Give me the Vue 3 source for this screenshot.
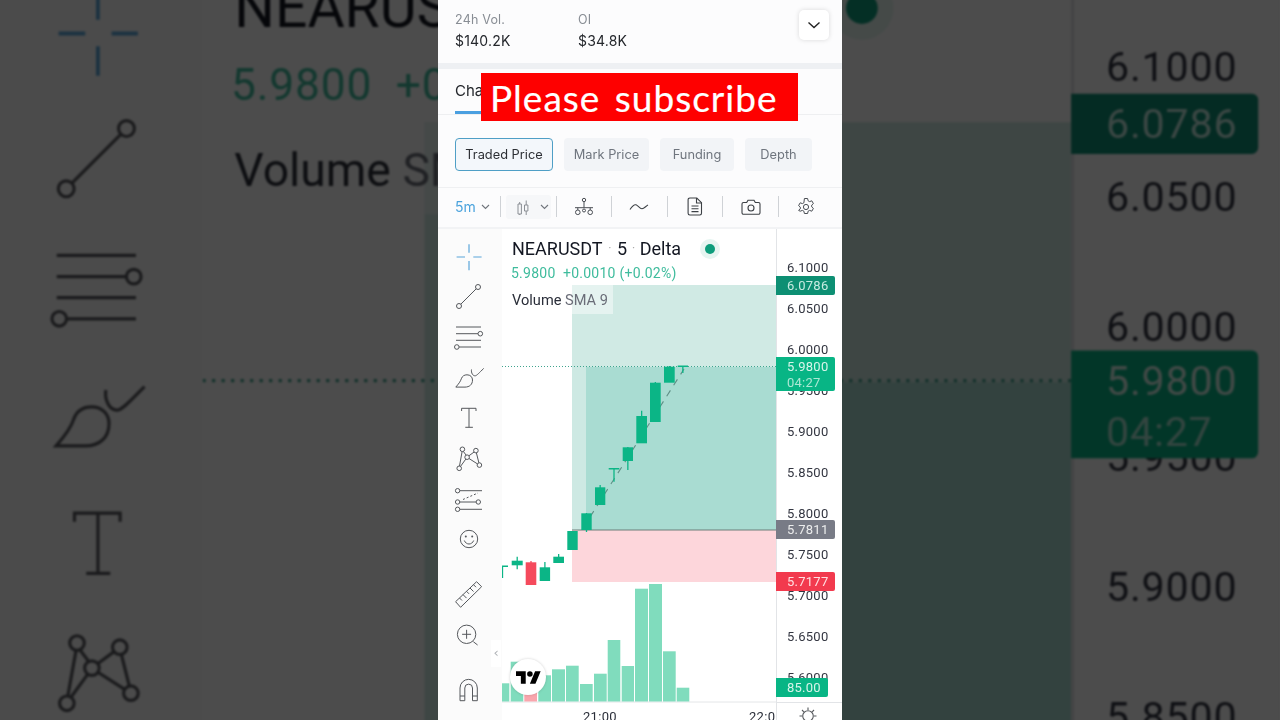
<template>
  <div class="stage">
    <div
      v-for="layer in layers"
      :key="layer"
      class="panel"
      :class="layer"
    >
      <!-- stats -->
      <div class="stats">
        <div class="stat">
          <span class="stat-label">24h Vol.</span>
          <span class="stat-value">$140.2K</span>
        </div>
        <div class="stat">
          <span class="stat-label">OI</span>
          <span class="stat-value">$34.8K</span>
        </div>
        <button class="collapse">
          <svg width="14" height="8" viewBox="0 0 14 8"><path d="M1.5 1.5 7 6.5l5.5-5" /></svg>
        </button>
      </div>

      <div class="tabs"><span class="tab">Chart</span></div>

      <div class="price-types">
        <span
          v-for="b in priceTypes"
          :key="b.label"
          class="price-type"
          :class="{ active: b.active }"
          :style="{ width: b.width + 'px' }"
        >{{ b.label }}</span>
      </div>

      <!-- top chart toolbar -->
      <div class="toolbar">
        <div class="cell first">
          <span class="interval">5m</span>
          <svg class="caret" width="9" height="6" viewBox="0 0 9 6"><path d="M1 1l3.5 3.5L8 1" /></svg>
        </div>
        <div class="cell">
          <span class="cell-hover">
            <svg width="12" height="18" viewBox="0 0 12 18" class="ic light">
              <path d="M1 6h3.400v10H1zM2.700 4v2M2.700 16v1M7.500 7h3.400v6H7.500zM9.200 2.500V7M9.200 13v4" />
            </svg>
            <svg class="caret" width="9" height="6" viewBox="0 0 9 6"><path d="M1 1l3.500 3.500L8 1" /></svg>
          </span>
        </div>
        <div class="cell">
          <svg width="22" height="20" viewBox="0 0 22 20" class="ic">
            <circle cx="11" cy="3" r="1.700" />
            <path d="M11 4.700v6M2 10.700h18M4.800 10.700v2.300M17.200 10.700v2.300" />
            <circle cx="4.800" cy="15.300" r="2.300" />
            <circle cx="17.200" cy="15.300" r="2.300" />
            <circle cx="11" cy="13.500" r="1.500" />
          </svg>
        </div>
        <div class="cell">
          <svg width="20" height="12" viewBox="0 0 20 12" class="ic dark">
            <path d="M1 8.500C3 5.500 5 3 7 3.800s4 4.200 6 4S17 5 19 4" />
          </svg>
        </div>
        <div class="cell">
          <svg width="16" height="19" viewBox="0 0 16 19" class="ic dark">
            <path d="M2.800 1h7l4.700 4.700v10.600a1.700 1.700 0 0 1-1.700 1.700h-10a1.700 1.700 0 0 1-1.700-1.700V2.700A1.700 1.700 0 0 1 2.800 1z" />
            <path d="M9.500 1v5h5M4.500 9h7M4.500 11.800h7M4.500 14.600h7" />
          </svg>
        </div>
        <div class="cell">
          <svg width="20" height="16" viewBox="0 0 20 16" class="ic dark">
            <path d="M2.500 3.500h3.200l1.300-2.300h6l1.300 2.300h3.200a1.500 1.500 0 0 1 1.500 1.500v8.800a1.500 1.500 0 0 1-1.500 1.500h-15A1.500 1.500 0 0 1 1 13.800V5a1.500 1.500 0 0 1 1.500-1.500z" />
            <circle cx="10" cy="9" r="3" />
          </svg>
        </div>
        <div class="cell">
          <svg width="18" height="18" viewBox="0 0 18 18" class="ic">
            <path d="M7.400 1h3.200l.5 2.300 1.500.8 2.200-.8 1.600 2.800-1.700 1.500v1.800l1.700 1.500-1.600 2.800-2.200-.8-1.500.8-.5 2.300H7.400l-.5-2.300-1.500-.8-2.200.8L1.600 12.900l1.700-1.500V9.600L1.600 8.100 3.200 5.300l2.200.8 1.500-.8z" transform="translate(0 -.5)" />
            <circle cx="9" cy="9" r="2.600" />
          </svg>
        </div>
      </div>

      <div class="chart">
        <!-- drawing tools -->
        <div class="tools">
          <div class="tool-group">
            <div class="tool">
              <svg viewBox="0 0 28 28" class="blue"><path d="M1.600 14H10M18.300 14h8.300M14 1.300v8.400M14 18v9.300" /></svg>
            </div>
            <div class="tool">
              <svg viewBox="0 0 28 28"><circle cx="23" cy="4" r="2.500" /><circle cx="4" cy="23" r="2.500" /><path d="M21.200 5.800 5.800 21.200" /></svg>
            </div>
            <div class="tool">
              <svg viewBox="0 0 28 28">
                <circle cx="25.300" cy="9.700" r="2.300" /><circle cx="1.800" cy="23" r="2.300" />
                <path d="M1 3h25M1 9.700h22M1 16.300h25M4.100 23H26" />
              </svg>
            </div>
            <div class="tool">
              <svg viewBox="0 0 28 28">
                <path d="M.800 23.100C3.500 20 5.500 17.500 6.300 14.800 7.300 12 9.300 10.800 12 10.800c3.300 0 5.500 2.200 5.500 5.200 0 4.500-3 7.100-7.500 7.100z" />
                <path d="M16.500 5.500c-.500 3.200 1.200 6.500 3.700 6.300 1.600-.200 3.800-2.800 8.500-7.400" />
              </svg>
            </div>
            <div class="tool">
              <svg viewBox="0 0 28 28"><path d="M6.600 7V4.300H21V7M14 4.300v19M10.300 23.300h7.600" /></svg>
            </div>
            <div class="tool">
              <svg viewBox="0 0 28 28">
                <circle cx="7.400" cy="4.300" r="2.300" /><circle cx="20.900" cy="5.600" r="2.300" /><circle cx="12.100" cy="12.200" r="2.300" />
                <circle cx="4.200" cy="23.300" r="2.300" /><circle cx="24.400" cy="20.100" r="2.300" />
                <path d="M7.100 6.600 4.500 21M8.300 6.400l2.800 3.700M13.900 10.800l5.200-3.800M21.400 7.900 23.900 17.900M14 13.500l8.300 5.300M10.800 14.100l-5.300 7.300" />
              </svg>
            </div>
            <div class="tool">
              <svg viewBox="0 0 28 28">
                <circle cx="2.600" cy="5.700" r="2.200" /><circle cx="2.600" cy="17" r="2.200" />
                <circle cx="23.300" cy="17" r="2.200" /><circle cx="2.600" cy="24.300" r="2.200" />
                <path d="M4.800 5.700H27M4.800 17h16.300M4.800 24.300H27" />
                <path d="M8 14.500 23 8" stroke-dasharray="2 2" />
              </svg>
            </div>
            <div class="tool">
              <svg viewBox="0 0 28 28">
                <circle cx="14" cy="14" r="8.700" />
                <circle class="fill" cx="10.800" cy="11.500" r="1" /><circle class="fill" cx="17.200" cy="11.500" r="1" />
                <path d="M9.300 15.500c1 2.300 2.700 3.500 4.700 3.500s3.700-1.200 4.700-3.500" />
              </svg>
            </div>
          </div>
          <div class="tool-group">
            <div class="tool">
              <svg viewBox="0 0 28 28">
                <path d="M.600 20.700 21.600.700l5 5-21 20.600z" />
                <path d="M4.500 17l2.500 2.500M8 13.600l3.500 3.500M11.500 10.300l2.500 2.500M15 7l3.500 3.500M18.500 3.700 21 6.200" />
              </svg>
            </div>
            <div class="tool">
              <svg viewBox="0 0 28 28">
                <circle cx="11.600" cy="13.300" r="9.200" />
                <path d="M11.600 8.800v9M7.100 13.300h9M18.300 20.700l4.300 3.300" />
              </svg>
            </div>
          </div>
          <div class="tool-group">
            <div class="tool">
              <svg viewBox="0 0 28 28">
                <path d="M5 24.700V12a8.650 8.650 0 0 1 17.300 0v12.700h-4.800V12a3.850 3.850 0 0 0-7.700 0v12.700z" />
                <path d="M5 20h4.800M17.500 20h4.800" />
              </svg>
            </div>
            <div class="tool">
              <svg viewBox="0 0 28 28"><path d="M10 14v-3a4 4 0 0 1 8 0v3" /></svg>
            </div>
          </div>
        </div>

        <!-- plot -->
        <div class="plot">
          <svg class="plot-svg" width="274" height="491" viewBox="502 229 274 491">
            <rect x="572" y="285" width="204" height="82" fill="#d0eae4" />
            <rect x="572" y="367" width="14" height="163" fill="#cde9e3" />
            <rect x="586" y="367" width="190" height="163" fill="#a9dcd2" />
            <rect x="572" y="530" width="204" height="52" fill="#fdd6db" />
            <rect x="572" y="285" width="41" height="29" fill="#fff" opacity=".45" />
            <line x1="572" y1="530" x2="776" y2="530" stroke="#6d7f7b" stroke-width="1.200" />
            <line x1="502" y1="366.500" x2="776" y2="366.500" stroke="#3fa48e" stroke-dasharray="1 2" />
            <line x1="590" y1="517" x2="684" y2="369" stroke="#5f8f86" stroke-width="1.100" stroke-dasharray="7 6" />
            <line x1="502" y1="702" x2="776" y2="702" stroke="#e4e6e8" />

            <rect
              v-for="v in volumes"
              :key="v.x"
              :x="v.x"
              :y="v.top"
              :width="v.w"
              :height="701.500 - v.top"
              :fill="v.red ? '#f9a6ad' : '#80dcbd'"
            />

            <g v-for="c in candles" :key="c.x">
              <line
                :x1="c.x + c.w / 2"
                :x2="c.x + c.w / 2"
                :y1="c.wt"
                :y2="c.wb"
                :stroke="c.red ? '#f54a5c' : '#0bb586'"
                stroke-width="1.300"
              />
              <rect
                :x="c.x"
                :y="c.t"
                :width="c.w"
                :height="c.b - c.t"
                :fill="c.red ? '#f54a5c' : '#0bb586'"
              />
            </g>
          </svg>

          <div class="legend">
            <div class="legend-title">
              <span>NEARUSDT</span><i>·</i><span>5</span><i>·</i><span>Delta</span>
            </div>
            <div class="legend-values">5.9800&nbsp; +0.0010 (+0.02%)</div>
            <div class="legend-volume">Volume <span>SMA 9</span></div>
          </div>
          <span class="status-dot"></span>

          <span class="time" style="left: 81px">21:00</span>
          <span class="time" style="left: 247px">22:00</span>
        </div>

        <!-- price axis -->
        <div class="axis">
          <span
            v-for="p in prices"
            :key="p"
            class="price"
            :style="{ top: priceTop(p) + 'px' }"
          >{{ p }}</span>
          <div
            v-for="t in tags"
            :key="t.text"
            class="tag"
            :class="t.cls"
            :style="{ top: t.top + 'px', height: t.h + 'px' }"
          >
            <span>{{ t.text }}</span>
            <span v-if="t.sub" class="tag-sub">{{ t.sub }}</span>
          </div>
          <svg class="sun" width="20" height="20" viewBox="0 0 20 20">
            <circle cx="10" cy="10" r="5.300" />
            <path d="M10 1.500v2.500M10 16v2.500M1.500 10H4M16 10h2.500M4 4l1.800 1.800M14.200 14.200 16 16M16 4l-1.800 1.800M5.800 14.200 4 16" />
          </svg>
        </div>

        <span class="hide-tools">‹</span>
        <div class="tv-badge">
          <svg width="25" height="13" viewBox="0 4 36 18">
            <path d="M14 22H7V11H0V4h14v18zM28 22h-8l7.500-18h8L28 22z" />
            <circle cx="20" cy="8" r="4" />
          </svg>
        </div>
      </div>
    </div>

    <div class="banner">Please subscribe</div>
  </div>
</template>

<script setup>
// sides of the frame are the same panel zoomed and darkened
const layers = ['backdrop', 'front'];

const priceTypes = [
  { label: 'Traded Price', width: 98, active: true },
  { label: 'Mark Price', width: 85 },
  { label: 'Funding', width: 74 },
  { label: 'Depth', width: 67 }
];

const prices = ['6.1000', '6.0500', '6.0000', '5.9500', '5.9000', '5.8500', '5.8000', '5.7500', '5.7000', '5.6500', '5.6000'];

// axis starts at y=229, 0.05 of price is 41px
const priceTop = (p) => Math.round(39 + (6.1 - Number(p)) * 820 - 9);

const tags = [
  { text: '6.0786', top: 47, h: 18.5, cls: 'dark' },
  { text: '5.9800', sub: '04:27', top: 128, h: 34, cls: 'green' },
  { text: '5.7811', top: 291, h: 19, cls: 'gray' },
  { text: '5.7177', top: 343, h: 19, cls: 'red' },
  { text: '85.00', top: 449, h: 19, cls: 'green short' }
];

const candles = [
  { x: 497, w: 11, t: 565.500, b: 567, wt: 566, wb: 578 },
  { x: 511.700, w: 11, t: 560.700, b: 565.300, wt: 556.700, wb: 569.300 },
  { x: 525.700, w: 10.600, t: 562.300, b: 585, wt: 561, wb: 585, red: true },
  { x: 539.700, w: 10.400, t: 567.300, b: 581, wt: 562, wb: 581 },
  { x: 553.300, w: 10.700, t: 556.700, b: 563, wt: 554, wb: 563 },
  { x: 567.300, w: 10.400, t: 531, b: 550, wt: 531, wb: 550 },
  { x: 581.300, w: 10.400, t: 513.300, b: 530, wt: 513, wb: 532 },
  { x: 595, w: 10.300, t: 487.300, b: 505, wt: 485, wb: 505 },
  { x: 608.700, w: 10.600, t: 468, b: 469.500, wt: 468, wb: 481.700 },
  { x: 622.700, w: 10.300, t: 447.300, b: 461, wt: 447, wb: 470 },
  { x: 636.300, w: 10.700, t: 416, b: 443.300, wt: 410.700, wb: 443 },
  { x: 650, w: 10.700, t: 382.700, b: 422, wt: 382, wb: 422 },
  { x: 664, w: 10.700, t: 366.700, b: 382.700, wt: 366, wb: 382 },
  { x: 677.700, w: 10.300, t: 365.500, b: 367, wt: 366, wb: 373 }
];

const volumes = [
  { x: 502, w: 7.300, top: 683.300 },
  { x: 510.700, w: 12.600, top: 661.700 },
  { x: 524.300, w: 12.700, top: 680, red: true },
  { x: 538.300, w: 12.700, top: 675.300 },
  { x: 552, w: 13, top: 669.300 },
  { x: 566, w: 12.700, top: 665.700 },
  { x: 580, w: 12.700, top: 684 },
  { x: 594, w: 12.700, top: 673.700 },
  { x: 607.700, w: 12.600, top: 640 },
  { x: 621.700, w: 12.300, top: 666 },
  { x: 635, w: 13, top: 588.700 },
  { x: 649, w: 13, top: 584 },
  { x: 663, w: 12.700, top: 651.300 },
  { x: 676.700, w: 12.600, top: 687.700 }
];
</script>

<style scoped>
.stage {
  position: relative;
  display: flex;
  justify-content: center;
  width: 1280px;
  height: 720px;
  overflow: hidden;
  background: #4d4d4d;
  font-family: Inter, "Liberation Sans", sans-serif;
}

.panel {
  flex: none;
  width: 404px;
  height: 720px;
  display: flex;
  flex-direction: column;
  overflow: hidden;
  background: #fcfcfd;
}

.panel.front {
  position: relative;
  filter: blur(0.3px);
}

.panel.backdrop {
  position: absolute;
  left: 438px;
  top: 0;
  transform: scale(3.17);
  filter: brightness(0.3) blur(0.35px);
}

.stats {
  position: relative;
  display: flex;
  height: 63px;
  padding: 13px 0 0 17px;
  box-sizing: border-box;
}

.stat {
  display: flex;
  flex-direction: column;
  gap: 6px;
  width: 123px;
}

.stat-label {
  font-size: 12.500px;
  line-height: 14px;
  color: #888d94;
  letter-spacing: 0.2px;
}

.stat-value {
  font-size: 14px;
  line-height: 16px;
  color: #24272c;
  letter-spacing: 0.2px;
}

.collapse {
  position: absolute;
  left: 361px;
  top: 10px;
  width: 30px;
  height: 30px;
  display: flex;
  align-items: center;
  justify-content: center;
  padding: 0;
  border: 0;
  border-radius: 5px;
  background: #fff;
  box-shadow: 0 0 5px rgba(0, 0, 0, 0.14);
}

.collapse path {
  fill: none;
  stroke: #222;
  stroke-width: 1.400;
}

.tabs {
  height: 46px;
  margin-top: 6px;
  padding-left: 17px;
  box-sizing: border-box;
  background: #fcfcfd;
  border-bottom: 1px solid #eeeff1;
  box-shadow: 0 -6px 0 #eef0f3;
}

.tab {
  display: block;
  width: 50px;
  height: 45px;
  line-height: 44px;
  font-size: 15px;
  color: #24272c;
  border-bottom: 3px solid #4a9fe0;
  box-sizing: border-box;
}

.price-types {
  display: flex;
  gap: 11px;
  height: 73px;
  padding: 22.500px 0 0 17px;
  box-sizing: border-box;
  border-bottom: 1px solid #eff0f2;
}

.price-type {
  height: 33px;
  box-sizing: border-box;
  display: flex;
  align-items: center;
  justify-content: center;
  font-size: 12.800px;
  color: #6f757e;
  background: #f2f4f7;
  border-radius: 4px;
}

.price-type.active {
  color: #2c2f34;
  background: #f3f7fb;
  border: 1px solid #4f9fc6;
}

.toolbar {
  display: grid;
  grid-template-columns: 45px repeat(6, 55.600px);
  align-items: center;
  height: 37px;
  padding: 0 0 2px 17px;
  border-bottom: 2px solid #f2f3f5;
}

.cell {
  height: 21px;
  display: flex;
  align-items: center;
  justify-content: center;
  border-left: 1px solid #cfd2d6;
}

.cell.first {
  justify-content: flex-start;
  gap: 5px;
  border-left: 0;
}

.cell-hover {
  display: flex;
  align-items: center;
  gap: 11px;
  padding-left: 11px;
  height: 24px;
  width: 45px;
  box-sizing: border-box;
  background: #f6f7f9;
  border-radius: 3px;
}

.interval {
  font-size: 14px;
  color: #4ba3dd;
}

.caret path {
  fill: none;
  stroke: #70757c;
  stroke-width: 1.100;
}

.ic {
  fill: none;
  stroke: #4a4e54;
  stroke-width: 1;
}

.ic.dark {
  stroke: #3c4045;
  stroke-width: 1.100;
}

.ic.light {
  stroke: #8a8e94;
}

.chart {
  position: relative;
  flex: 1;
  display: flex;
  min-height: 0;
  background: #fff;
}

.tools {
  flex: none;
  width: 64px;
  display: flex;
  flex-direction: column;
  gap: 15px;
  padding: 8px 4px 0 0;
  box-sizing: border-box;
  background: #fbfbfb;
}

.tool {
  height: 40.300px;
  display: flex;
  align-items: center;
  justify-content: center;
  padding-left: 1px;
}

.tool svg {
  width: 28px;
  height: 28px;
  overflow: visible;
  fill: none;
  stroke: #55585c;
  stroke-width: 1;
}

.tool svg.blue {
  stroke: #5ba6da;
  stroke-width: 1.200;
}

.tool svg .fill {
  fill: #55585c;
  stroke: none;
}

.plot {
  position: relative;
  flex: none;
  width: 274px;
  overflow: hidden;
  background: #fff;
}

.plot-svg {
  display: block;
}

.legend {
  position: absolute;
  left: 10px;
  top: 8px;
  font-family: Roboto, "Liberation Sans", sans-serif;
}

.legend-title {
  display: flex;
  align-items: center;
  height: 22px;
  font-size: 18px;
  color: #131722;
  white-space: nowrap;
}

.legend-title i {
  width: 14.500px;
  text-align: center;
  font-style: normal;
  font-size: 12px;
  color: #aaa;
}

.legend-title i:last-of-type {
  width: 12.500px;
}

.legend-values {
  margin-top: 5px;
  height: 18px;
  line-height: 18px;
  font-size: 14px;
  letter-spacing: 0.25px;
  color: #3fbc9d;
  white-space: nowrap;
  margin-left: -1px;
}

.legend-volume {
  margin-top: 9px;
  height: 18px;
  line-height: 18px;
  font-size: 14.600px;
  color: #2a2e39;
  white-space: nowrap;
}

.legend-volume span {
  color: #6a6d78;
}

.status-dot {
  position: absolute;
  left: 203px;
  top: 15px;
  width: 10px;
  height: 10px;
  border-radius: 50%;
  background: #0e9d7c;
  box-shadow: 0 0 0 5px #e6f5f1;
}

.time {
  position: absolute;
  top: 480px;
  font-family: Roboto, "Liberation Sans", sans-serif;
  font-size: 13px;
  line-height: 15px;
  color: #2a2e39;
  letter-spacing: 0.3px;
}

.axis {
  position: relative;
  flex: 1;
  border-left: 1px solid #e2e4e7;
  font-family: Roboto, "Liberation Sans", sans-serif;
}

.axis::after {
  content: "";
  position: absolute;
  left: 0;
  right: 0;
  top: 473px;
  border-top: 1px solid #e2e4e7;
}

.price {
  position: absolute;
  left: 10px;
  font-size: 13px;
  line-height: 18px;
  letter-spacing: 0.25px;
  color: #333641;
}

.tag {
  position: absolute;
  left: -1px;
  width: 59px;
  padding: 1.500px 0 0 11px;
  box-sizing: border-box;
  display: flex;
  flex-direction: column;
  justify-content: center;
  font-size: 13px;
  line-height: 16px;
  letter-spacing: 0.25px;
  border-radius: 0 2px 2px 0;
}

.tag.dark { background: #0d8f73; color: #c6ebe1; }
.tag.green { background: #08b585; color: #d7f4ea; }
.tag.gray { background: #787b86; color: #eceded; }
.tag.red { background: #f23a4e; color: #ffdfe1; }
.tag.short { width: 52px; }

.tag-sub {
  color: #abe7d4;
}

.sun {
  position: absolute;
  left: 21px;
  top: 477px;
  fill: none;
  stroke: #55585c;
  stroke-width: 1.100;
}

.hide-tools {
  position: absolute;
  left: 53px;
  top: 411px;
  width: 10px;
  height: 27px;
  line-height: 25px;
  text-align: center;
  font-family: "DejaVu Sans", sans-serif;
  font-size: 13px;
  color: #aeb1b5;
  background: #fff;
}

.tv-badge {
  position: absolute;
  left: 72px;
  top: 430px;
  width: 36px;
  height: 36px;
  display: flex;
  align-items: center;
  justify-content: center;
  border-radius: 50%;
  background: #fff;
  box-shadow: 0 0 3px rgba(0, 0, 0, 0.18);
}

.banner {
  position: absolute;
  left: 481px;
  top: 73px;
  width: 317px;
  height: 48px;
  padding-left: 9px;
  box-sizing: border-box;
  background: #fe0000;
  color: #fff;
  font-family: Lato, "DejaVu Sans", sans-serif;
  font-size: 37px;
  line-height: 50px;
  letter-spacing: 1px;
  word-spacing: 4px;
  -webkit-text-stroke: 0.2px #fff;
  white-space: nowrap;
}
</style>

<style>
html,
body {
  margin: 0;
  background: #4d4d4d;
}
</style>
